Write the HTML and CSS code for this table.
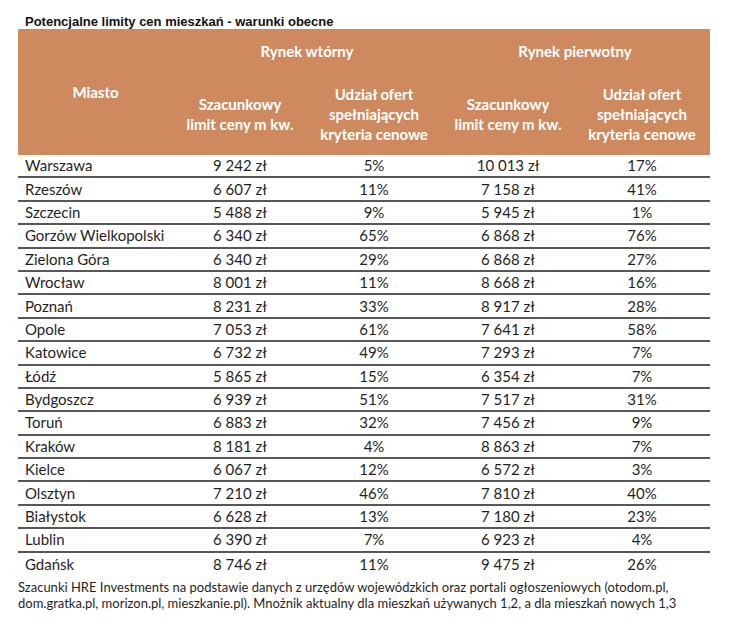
FILE: index.html
```html
<!DOCTYPE html>
<html lang="pl">
<head>
<meta charset="utf-8">
<link rel="stylesheet" href="styles.css">
</head>
<body>
<div class="page">
  <h1 class="title">Potencjalne limity cen mieszkań - warunki obecne</h1>
  <div class="head">
    <div class="h-city">Miasto</div>
    <div class="h-group h-g1">Rynek wtórny</div>
    <div class="h-group h-g2">Rynek pierwotny</div>
    <div class="h-sub">Szacunkowy<br>limit ceny m kw.</div>
    <div class="h-sub">Udział ofert<br>spełniających<br>kryteria cenowe</div>
    <div class="h-sub">Szacunkowy<br>limit ceny m kw.</div>
    <div class="h-sub">Udział ofert<br>spełniających<br>kryteria cenowe</div>
  </div>
  <div class="rows">
    <div class="row"><span class="city">Warszawa</span><span>9 242 zł</span><span>5%</span><span>10 013 zł</span><span>17%</span></div>
    <div class="row"><span class="city">Rzeszów</span><span>6 607 zł</span><span>11%</span><span>7 158 zł</span><span>41%</span></div>
    <div class="row"><span class="city">Szczecin</span><span>5 488 zł</span><span>9%</span><span>5 945 zł</span><span>1%</span></div>
    <div class="row"><span class="city">Gorzów Wielkopolski</span><span>6 340 zł</span><span>65%</span><span>6 868 zł</span><span>76%</span></div>
    <div class="row"><span class="city">Zielona Góra</span><span>6 340 zł</span><span>29%</span><span>6 868 zł</span><span>27%</span></div>
    <div class="row"><span class="city">Wrocław</span><span>8 001 zł</span><span>11%</span><span>8 668 zł</span><span>16%</span></div>
    <div class="row"><span class="city">Poznań</span><span>8 231 zł</span><span>33%</span><span>8 917 zł</span><span>28%</span></div>
    <div class="row"><span class="city">Opole</span><span>7 053 zł</span><span>61%</span><span>7 641 zł</span><span>58%</span></div>
    <div class="row"><span class="city">Katowice</span><span>6 732 zł</span><span>49%</span><span>7 293 zł</span><span>7%</span></div>
    <div class="row"><span class="city">Łódź</span><span>5 865 zł</span><span>15%</span><span>6 354 zł</span><span>7%</span></div>
    <div class="row"><span class="city">Bydgoszcz</span><span>6 939 zł</span><span>51%</span><span>7 517 zł</span><span>31%</span></div>
    <div class="row"><span class="city">Toruń</span><span>6 883 zł</span><span>32%</span><span>7 456 zł</span><span>9%</span></div>
    <div class="row"><span class="city">Kraków</span><span>8 181 zł</span><span>4%</span><span>8 863 zł</span><span>7%</span></div>
    <div class="row"><span class="city">Kielce</span><span>6 067 zł</span><span>12%</span><span>6 572 zł</span><span>3%</span></div>
    <div class="row"><span class="city">Olsztyn</span><span>7 210 zł</span><span>46%</span><span>7 810 zł</span><span>40%</span></div>
    <div class="row"><span class="city">Białystok</span><span>6 628 zł</span><span>13%</span><span>7 180 zł</span><span>23%</span></div>
    <div class="row"><span class="city">Lublin</span><span>6 390 zł</span><span>7%</span><span>6 923 zł</span><span>4%</span></div>
    <div class="row last"><span class="city">Gdańsk</span><span>8 746 zł</span><span>11%</span><span>9 475 zł</span><span>26%</span></div>
  </div>
  <p class="note">Szacunki HRE Investments na podstawie danych z urzędów wojewódzkich oraz portali ogłoszeniowych (otodom.pl,<br>dom.gratka.pl, morizon.pl, mieszkanie.pl). Mnożnik aktualny dla mieszkań używanych 1,2, a dla mieszkań nowych 1,3</p>
</div>
</body>
</html>
```

FILE: styles.css
```css
html, body {
  margin: 0;
  padding: 0;
  background: #ffffff;
}

.page {
  padding: 14px 0 0 18px;
  width: 692px;
  font-family: Lato, "Open Sans", sans-serif;
  color: #1f1f1f;
}

.title {
  margin: 0 0 0 7px;
  font-family: "Liberation Sans", Arial, sans-serif;
  font-weight: bold;
  font-size: 13px;
  line-height: 15px;
  color: #111;
}

.head {
  display: grid;
  grid-template-columns: 155px 134px 134px 134px 134px;
  grid-template-rows: 43px 83px;
  background: #ce8a5e;
  color: #ffffff;
  font-weight: bold;
  font-size: 15px;
  line-height: 20px;
  text-align: center;
}

.h-city {
  grid-row: 1 / 3;
  grid-column: 1;
  display: flex;
  align-items: center;
  justify-content: center;
}

.h-group {
  display: flex;
  align-items: center;
  justify-content: center;
}

.h-g1 { grid-column: 2 / 4; grid-row: 1; }
.h-g2 { grid-column: 4 / 6; grid-row: 1; }

.h-sub {
  grid-row: 2;
  display: flex;
  align-items: center;
  justify-content: center;
}

.rows {
  display: flex;
  flex-direction: column;
}

.row {
  display: grid;
  grid-template-columns: 155px 134px 134px 134px 134px;
  height: 23.4px;
  box-sizing: border-box;
  border-bottom: 2px solid #575757;
  font-size: 15px;
  line-height: 21px;
  align-items: center;
  text-align: center;
}

.row.last {
  border-bottom: none;
}

.row .city {
  text-align: left;
  padding-left: 7px;
}

.note {
  margin: 3px 0 0 0;
  font-size: 13px;
  line-height: 16px;
  color: #1f1f1f;
  white-space: nowrap;
}
```
